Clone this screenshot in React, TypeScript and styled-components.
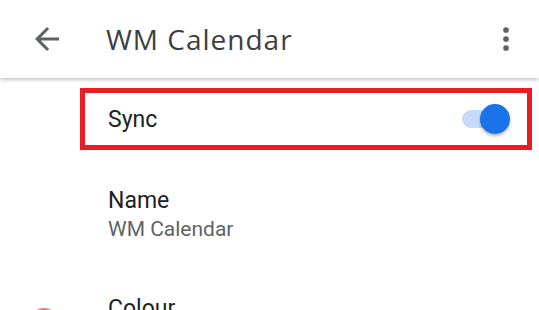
import React, { useState } from 'react'
import styled, { createGlobalStyle } from 'styled-components'

const GlobalStyle = createGlobalStyle`
  html, body {
    margin: 0;
    padding: 0;
    background: #ffffff;
    overflow: hidden;
  }
  body {
    font-family: Roboto, 'Noto Sans', 'Liberation Sans', sans-serif;
  }
`

const color = {
  title: '#3c4043',
  text: '#202124',
  secondary: '#5f6368',
  icon: '#5f6368',
  blue: '#1a73e8',
  track: '#c6dafc',
  highlight: '#ed1c24',
}

const App = () => {
  const [sync, setSync] = useState(true)

  return (
    <Screen>
      <GlobalStyle />
      <TopBar>
        <IconButton aria-label="Back">
          <svg width="36" height="36" viewBox="0 0 24 24" fill={color.icon}>
            <path d="M20 11H7.83l5.59-5.59L12 4l-8 8 8 8 1.41-1.41L7.83 13H20v-2z" />
          </svg>
        </IconButton>
        <Title>WM Calendar</Title>
        <IconButton aria-label="More options">
          <svg width="36" height="36" viewBox="0 0 24 24" fill={color.icon}>
            <circle cx="12" cy="6" r="1.9" />
            <circle cx="12" cy="12" r="1.9" />
            <circle cx="12" cy="18" r="1.9" />
          </svg>
        </IconButton>
      </TopBar>

      <Settings>
        <SyncRow onClick={() => setSync(!sync)}>
          <RowLabel>Sync</RowLabel>
          <Switch on={sync}>
            <Track on={sync} />
            <Knob on={sync} />
          </Switch>
        </SyncRow>

        <Field>
          <RowLabel>Name</RowLabel>
          <RowValue>WM Calendar</RowValue>
        </Field>

        <ColourRow>
          <Swatch />
          <RowLabel>Colour</RowLabel>
        </ColourRow>
      </Settings>
    </Screen>
  )
}

const Screen = styled.div`
  width: 539px;
  height: 310px;
  display: flex;
  flex-direction: column;
  overflow: hidden;
`

const TopBar = styled.header`
  height: 78px;
  flex-shrink: 0;
  display: flex;
  align-items: center;
  padding: 0 15px 0 29px;
  background: #ffffff;
  box-shadow: 0 2px 4px rgba(0, 0, 0, 0.22);
  position: relative;
  z-index: 1;
`

const IconButton = styled.div`
  width: 36px;
  height: 36px;
  display: flex;
  align-items: center;
  justify-content: center;
`

const Title = styled.h1`
  flex: 1;
  margin: 0 0 0 41px;
  font-family: 'Open Sans', Roboto, sans-serif;
  font-size: 28px;
  font-weight: 400;
  letter-spacing: 1px;
  line-height: 36px;
  color: ${color.title};
`

const Settings = styled.div`
  display: flex;
  flex-direction: column;
  padding-top: 10px;
`

const SyncRow = styled.div`
  box-sizing: border-box;
  height: 62px;
  margin: 0 7px 0 80px;
  padding: 0 17px 0 23px;
  display: flex;
  align-items: center;
  justify-content: space-between;
  border: 5px solid ${color.highlight};
  cursor: pointer;
`

const RowLabel = styled.div`
  font-size: 23px;
  line-height: 29px;
  color: ${color.text};
`

const RowValue = styled.div`
  font-size: 21px;
  line-height: 29px;
  color: ${color.secondary};
`

const Switch = styled.div<{ on: boolean }>`
  width: 48px;
  height: 30px;
  display: flex;
  align-items: center;
  justify-content: ${p => (p.on ? 'flex-end' : 'flex-start')};
  position: relative;
`

const Track = styled.div<{ on: boolean }>`
  position: absolute;
  left: 0;
  right: 14px;
  top: 6px;
  height: 18px;
  border-radius: 9px;
  background: ${p => (p.on ? color.track : '#dadce0')};
`

const Knob = styled.div<{ on: boolean }>`
  position: relative;
  width: 30px;
  height: 30px;
  border-radius: 50%;
  background: ${p => (p.on ? color.blue : '#f1f3f4')};
  box-shadow: 0 2px 3px rgba(0, 0, 0, 0.3);
`

const Field = styled.div`
  margin: 36px 0 0 108px;
  display: flex;
  flex-direction: column;
`

const ColourRow = styled.div`
  margin-top: 50px;
  padding-left: 29px;
  display: flex;
  align-items: flex-start;
  gap: 49px;
`

const Swatch = styled.div`
  width: 30px;
  height: 30px;
  margin-top: 14px;
  border-radius: 50%;
  background: #e67c73;
`

export default App
